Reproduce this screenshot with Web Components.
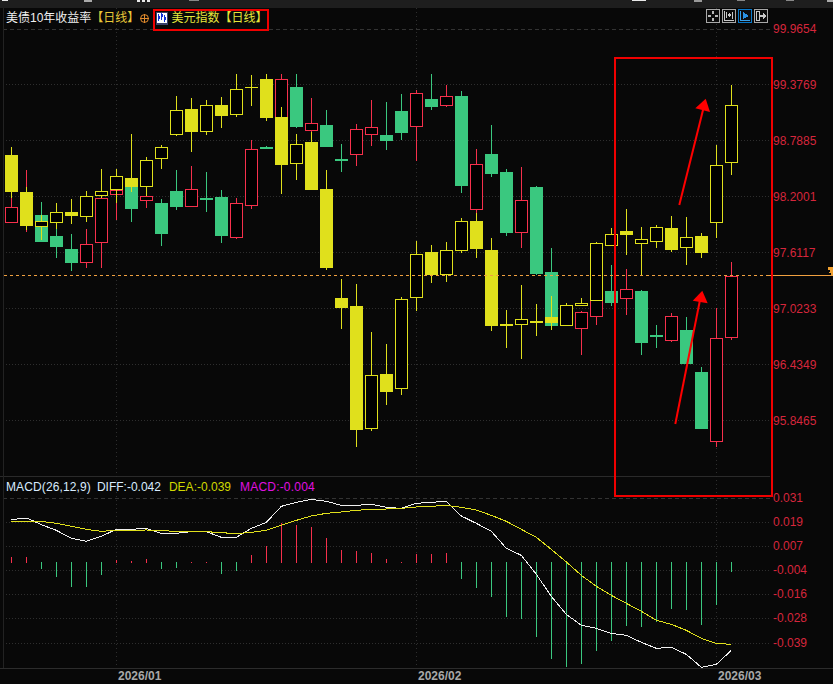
<!DOCTYPE html>
<html lang="zh"><head><meta charset="utf-8"><title>K线</title>
<style>html,body{margin:0;padding:0;background:#080808}</style></head>
<body>
<chart-app>
  <span slot="title1">美债10年收益率</span><span slot="cycle1">【日线】</span>
  <span slot="title2">美元指数【日线】</span>
</chart-app>
<script>
const NS='http://www.w3.org/2000/svg';
const YEL='#e0e01c',GRN='#3ac87f',RED='#f6304c';
const cx=i=>11.5+15*i;
function el(n,a){const e=document.createElementNS(NS,n);for(const k in a)e.setAttribute(k,a[k]);return e}
function candle(g,i,d,col,hollow){
  if(!d)return;
  const [hi,t,b,lo]=d,x=cx(i);
  g.append(el('rect',{x:x-.5,y:hi,width:1,height:lo-hi,fill:col}));
  if(hollow){
    g.append(el('rect',{x:x-6.5,y:t,width:13,height:b-t,fill:col}));
    g.append(el('rect',{x:x-5.5,y:t+1,width:11,height:b-t-2,fill:'#000'}));
  }else g.append(el('rect',{x:x-6.5,y:t,width:13,height:b-t,fill:col}));
}
/* [high, body top, body bottom, low, hollow] */
const DXY=[[198,207,223,223,1],[170,195,220,232,1],[202,215,242,242,0],[226,236,247,258,0],[234,249,263,271,0],[229,244,263,268,1],[196,198,243,268,1],[188,190,195,220,1],[187,187,209,222,0],[187,196,201,208,1],[199,203,234,246,0],[170,191,207,210,0],[166,189,207,207,1],[172,198,200,212,0],[190,197,236,243,0],[198,203,238,239,1],[140,149,206,209,1],[146,147,149,149,0],[74,79,118,120,1],[74,87,127,128,0],[98,123,131,142,1],[110,125,147,147,0],[144,159,161,172,0],[124,129,155,166,1],[100,127,135,146,1],[102,135,141,150,0],[94,111,133,140,0],[90,93,127,161,1],[74,99,107,110,0],[85,96,106,107,1],[91,96,186,193,0],[149,164,210,222,1],[125,154,174,177,0],[169,172,233,236,0],[167,200,233,248,1],[186,187,274,275,0],[248,272,326,326,0],null,[311,312,329,355,1],[300,300,317,325,1],[265,291,303,306,0],[269,289,299,315,1],[290,291,343,355,0],[325,335,337,348,0],[313,316,341,342,1],[317,330,364,364,0],[367,372,429,429,0],[308,338,442,447,1],[262,276,338,340,1]];
const UST=[[147,155,192,198,0],[187,192,226,230,0],[215,221,227,240,1],[203,212,223,229,1],[199,212,216,224,0],[191,196,217,222,1],[169,191,196,198,1],[169,176,190,203,1],[134,178,187,192,0],[157,160,187,196,1],[145,147,159,169,1],[96,110,135,136,1],[98,109,132,152,0],[100,105,132,135,1],[97,105,116,128,0],[74,89,115,117,1],[75,87,88,106,0],[74,79,118,121,0],[107,117,165,194,0],[134,144,164,180,1],[132,142,190,190,0],[170,189,268,270,0],[279,298,308,329,0],[284,306,430,447,0],[332,375,429,431,1],[344,374,392,405,0],[297,299,389,395,1],[241,254,298,311,1],[245,252,275,283,0],[242,250,275,282,1],[218,221,251,253,1],[213,221,249,258,0],[238,250,326,331,0],[310,324,326,348,0],[285,319,325,359,1],[304,321,323,336,0],[296,317,323,330,0],[303,305,326,326,1],[298,303,306,306,1],[242,243,301,301,1],[228,234,246,246,1],[209,231,235,255,0],[227,239,244,275,1],[225,227,242,248,1],[216,228,250,252,0],[217,237,248,265,1],[233,236,253,258,0],[145,165,223,238,1],[85,105,163,175,1]];
/* histogram end y, base 563 */
const HIST=[557,557,569,577,587,587,575,560,561,559,569,568,562,562,574,571,555,546,523,525,527,538,550,551,553,559,562,554,554,553,579,588,597,617,619,637,659,667,664,651,641,626,627,622,609,610,625,605,572];
const DIFF=[[34,131],[60,128],[85,128],[124,146],[169,163],[214,187],[259,196],[304,181],[349,160],[394,160],[439,157],[484,172],[529,172],[574,167],[619,167],[664,184],[709,184],[754,157],[799,139]].map(p=>[p[0]/3,476+p[1]/3])
 .concat([[4,91],[49,79],[94,70],[139,76],[184,88],[229,88],[274,85],[319,94],[364,97],[409,82],[454,79],[499,76],[544,120],[589,142],[634,166],[679,217],[724,238],[769,295],[814,361]].map(p=>[280+p[0]/3,476+p[1]/3]))
 .concat([[19,415],[64,448],[109,457],[154,472],[199,478],[244,499],[289,517],[334,514],[379,535],[424,574],[469,565],[514,523]].map(p=>[560+p[0]/3,476+p[1]/3]));
const DEA=[[34,136],[124,136],[169,142],[214,151],[259,160],[304,166],[349,163],[439,162],[484,163],[529,167],[619,167],[664,170],[709,173],[754,169],[799,163]].map(p=>[p[0]/3,476+p[1]/3])
 .concat([[4,148],[49,133],[94,120],[139,112],[184,108],[229,103],[274,100],[319,99],[364,97],[409,93],[454,91],[499,88],[544,94],[589,102],[634,118],[679,136],[724,160],[769,184],[814,220]].map(p=>[280+p[0]/3,476+p[1]/3]))
 .concat([[19,258],[64,298],[109,331],[154,358],[199,382],[244,406],[289,433],[334,445],[379,463],[424,487],[469,502],[514,505]].map(p=>[560+p[0]/3,476+p[1]/3]));

function grid(svg,ys,y0,y1){
  const g=el('g',{'shape-rendering':'crispEdges',fill:'none'});
  ys.forEach((y,k)=>g.append(el('line',{x1:3,x2:770,y1:y+.5,y2:y+.5,stroke:k?'#2e2e2e':'#333','stroke-dasharray':k?'1 2':'4 3'})));
  [116.5,416.5,716.5].forEach(x=>g.append(el('line',{x1:x,x2:x,y1:y0,y2:y1,stroke:'#2e2e2e','stroke-dasharray':'1 3'})));
  g.append(el('line',{x1:3.5,x2:3.5,y1:y0,y2:y1,stroke:'#222'}));
  g.append(el('line',{x1:770.5,x2:770.5,y1:y0,y2:y1,stroke:'#2a2a2a','stroke-dasharray':'1 3'}));
  svg.append(g);
}

class TopStrip extends HTMLElement{constructor(){super();this.attachShadow({mode:'open'}).innerHTML=`
<style>:host{display:flex;height:8px;background:#1e1e1e;overflow:hidden}svg{display:block}</style>
<svg width="833" height="8" shape-rendering="crispEdges">
<g fill="#e8e8e8"><rect x="2" y="0" width="6" height="1"/><rect x="84" y="0" width="8" height="2" fill="#aaa"/><rect x="137" y="0" width="3" height="2"/><rect x="142" y="0" width="3" height="2"/><rect x="147" y="0" width="3" height="2"/><rect x="189" y="0" width="10" height="1" fill="#888"/>
<rect x="632" y="0" width="14" height="1"/><rect x="694" y="0" width="8" height="2" fill="#999"/><rect x="737" y="0" width="8" height="1" fill="#888"/><rect x="786" y="0" width="8" height="1" fill="#888"/><rect x="827" y="0" width="6" height="2" fill="#aaa"/></g></svg>`}}
customElements.define('top-strip',TopStrip);

class ToolButton extends HTMLElement{constructor(){super();this.attachShadow({mode:'open'}).innerHTML=`
<style>:host{display:flex;width:12px;height:12px;border:1px solid #a8a8a8;background:#0c0c0c}
:host([active]){border-color:#0a78c8}::slotted(svg){display:block}</style><slot></slot>`}}
customElements.define('tool-button',ToolButton);

class AxisLabels extends HTMLElement{constructor(){super();this.attachShadow({mode:'open'}).innerHTML=`
<style>:host{display:flex;flex-direction:column;font:12px/14px "Liberation Sans",Arial,sans-serif;color:#d6263c;padding-left:3px;overflow:visible}
span{display:block;height:14px;white-space:nowrap}</style>`;
 const r=this.shadowRoot;(this.getAttribute('values')||'').split(',').forEach(v=>{const s=document.createElement('span');s.textContent=v;r.append(s)});
 const st=document.createElement('style');st.textContent=`:host{padding-top:${this.getAttribute('top')}px;gap:${this.getAttribute('gap')}px}`;r.append(st);}}
customElements.define('axis-labels',AxisLabels);

class KlinePane extends HTMLElement{constructor(){super();const r=this.attachShadow({mode:'open'});r.innerHTML=`
<style>:host{display:grid;grid-template-columns:770px 63px;height:468px;position:relative;box-sizing:border-box}
.plot{position:relative;height:468px}svg.c{display:block}
.legend{position:absolute;left:6px;top:3px;display:flex;align-items:center;font:12px/14px "Liberation Sans","Noto Sans CJK SC",sans-serif;color:#f0f0f0;white-space:nowrap}
.cyc{color:#e8c838;margin-right:1px}.t2{color:#e6e63c;margin-left:3px}
.tools{position:absolute;right:2px;top:1px;display:flex;gap:2px}
.legend svg{display:block}.leg-ico{margin-left:7px}
.mark{position:absolute;left:58px;top:259px;width:5px;height:8px}
.price{position:relative}
</style>
<div class="plot"><svg class="c" width="770" height="468" viewBox="0 8 770 468"></svg>
<div class="legend"><slot name="title1"></slot><span class="cyc"><slot name="cycle1"></slot></span>
<svg width="9" height="9" viewBox="0 0 9 9"><circle cx="4.5" cy="4.5" r="3.9" fill="none" stroke="#e08a2c"/><path d="M0 4.5H9M4.5 0V9" stroke="#e08a2c"/></svg>
<svg class="leg-ico" width="12" height="13" viewBox="0 0 12 13" shape-rendering="crispEdges"><rect width="12" height="13" fill="#39406a"/><rect x="0.5" y="0.5" width="10" height="10" fill="#fff"/><path d="M2.5 2V9M5.5 1V8M8.5 3V10" stroke="#1030d8"/><rect x="2" y="4" width="2" height="3" fill="#1030d8"/><rect x="5" y="2" width="2" height="3" fill="#1030d8"/><rect x="8" y="5" width="2" height="3" fill="#1030d8"/></svg>
<span class="t2"><slot name="title2"></slot></span></div>
<div class="tools">
<tool-button><svg width="12" height="12" viewBox="0 0 12 12" shape-rendering="crispEdges" fill="#b8b8b8"><rect x="5" y="1" width="2" height="3"/><rect x="5" y="8" width="2" height="3"/><rect x="1" y="5" width="3" height="2"/><rect x="8" y="5" width="3" height="2"/></svg></tool-button>
<tool-button><svg width="12" height="12" viewBox="0 0 12 12" shape-rendering="crispEdges" fill="#c8c8c8"><rect x="1" y="1" width="1" height="10"/><rect x="1" y="10" width="10" height="1"/><rect x="3" y="2" width="1" height="6"/><rect x="5" y="4" width="3" height="2"/><rect x="6" y="3" width="1" height="4"/><rect x="9" y="2" width="1" height="7"/></svg></tool-button>
<tool-button active><svg width="12" height="12" viewBox="0 0 12 12" shape-rendering="crispEdges"><path d="M1 1H2V10H11V11H1Z" fill="#3aa0e8"/><path d="M4 2L10 6L4 9Z" fill="#2a90e0"/></svg></tool-button>
<tool-button><svg width="12" height="12" viewBox="0 0 12 12" shape-rendering="crispEdges" fill="#c8c8c8"><path d="M1 1H5V11H1ZM2 2V10H4V2Z"/><rect x="5" y="5" width="4" height="2"/><path d="M8 3L11 6L8 9Z"/></svg></tool-button>
</div></div>
<div class="price"><axis-labels top="14" gap="42" values="99.9654,99.3769,98.7885,98.2001,97.6117,97.0233,96.4349,95.8465"></axis-labels>
<svg class="mark" viewBox="0 0 5 8" shape-rendering="crispEdges"><path d="M0 0H5V8H3V6H1V5H2V3H0Z" fill="#f0a030"/></svg></div>`;
 const svg=r.querySelector('svg.c');
 grid(svg,[29,84,140,196,252,308,364,420],8,476);
 const g=el('g',{'shape-rendering':'crispEdges'});
 DXY.forEach((d,i)=>d&&candle(g,i,d,d[4]?RED:GRN,d[4]));
 UST.forEach((d,i)=>candle(g,i,d,YEL,d[4]));
 svg.append(g);
 svg.append(el('line',{x1:4,x2:768,y1:275.5,y2:275.5,stroke:'#f0a040','stroke-dasharray':'3 3','shape-rendering':'crispEdges'}));
 }}
customElements.define('kline-pane',KlinePane);

class MacdPane extends HTMLElement{constructor(){super();const r=this.attachShadow({mode:'open'});r.innerHTML=`
<style>:host{display:grid;grid-template-columns:770px 63px;height:192px;position:relative}
.plot{position:relative;height:192px}svg{display:block}
.legend{position:absolute;left:6px;top:4px;display:flex;gap:9px;font:12px/14px "Liberation Sans",Arial,sans-serif;white-space:nowrap;color:#d8ecff}
.n{margin-right:-3px;letter-spacing:.12px}.a{color:#d0d800;margin-left:-1px}.b{color:#e010e0;letter-spacing:.2px}
</style>
<div class="plot"><svg width="770" height="192" viewBox="0 476 770 192"></svg>
<div class="legend"><span class="n">MACD(26,12,9)</span><span>DIFF:-0.042</span><span class="a">DEA:-0.039</span><span class="b">MACD:-0.004</span></div></div>
<axis-labels top="15" gap="10.1" values="0.031,0.019,0.007,-0.004,-0.016,-0.028,-0.039"></axis-labels>`;
 const svg=r.querySelector('svg');
 const top=el('line',{x1:0,x2:770,y1:476.5,y2:476.5,stroke:'#2a2a2a','shape-rendering':'crispEdges'});svg.append(top);
 grid(svg,[498,522,546,570,594,618,643],476,668);
 const g=el('g',{'shape-rendering':'crispEdges'});
 HIST.forEach((y,i)=>{const up=y<563;g.append(el('rect',{x:cx(i)-.5,y:up?y:562,width:1,height:up?563-y:y-562,fill:up?RED:GRN}))});
 svg.append(g);
 const pl=(p,c)=>svg.append(el('polyline',{points:p.map(q=>q.join(',')).join(' '),fill:'none',stroke:c,'stroke-width':1,'shape-rendering':'crispEdges'}));
 pl(DIFF,'#f0f0f0');pl(DEA,'#e0e01c');
 }}
customElements.define('macd-pane',MacdPane);

class TimeAxis extends HTMLElement{constructor(){super();this.attachShadow({mode:'open'}).innerHTML=`
<style>:host{display:flex;height:16px;box-sizing:border-box;border-top:1px solid #2c2c2c;padding-left:118px;font:bold 12px/15px "Liberation Sans",Arial,sans-serif;color:#a8a8a8}
span{display:block;flex:0 0 300px}</style><span>2026/01</span><span>2026/02</span><span>2026/03</span>`}}
customElements.define('time-axis',TimeAxis);

class NoteLayer extends HTMLElement{constructor(){super();this.attachShadow({mode:'open'}).innerHTML=`
<style>:host{position:absolute;left:0;top:0;width:833px;height:684px;pointer-events:none}svg{display:block}</style>
<svg width="833" height="684" viewBox="0 0 833 684">
<line x1="768" x2="833" y1="275.5" y2="275.5" stroke="#f0a040" shape-rendering="crispEdges"/>
<g fill="none" stroke="#f00000" stroke-width="2" shape-rendering="crispEdges"><rect x="615" y="58" width="157" height="438"/><rect x="154" y="10" width="114" height="20"/></g>
<line x1="679.3" y1="205" x2="703.5" y2="108" stroke="#f00" stroke-width="2"/><path d="M705.7 98.7L695.3 108.3L710 112Z" fill="#f00"/>
<line x1="675.3" y1="424" x2="700" y2="300" stroke="#f00" stroke-width="2"/><path d="M702.3 290.7L692.7 300.7L707.7 303.3Z" fill="#f00"/>
</svg>`}}
customElements.define('note-layer',NoteLayer);

class ChartApp extends HTMLElement{constructor(){super();this.attachShadow({mode:'open'}).innerHTML=`
<style>:host{display:flex;flex-direction:column;width:833px;height:684px;background:#080808;position:relative;overflow:hidden}</style>
<top-strip></top-strip>
<kline-pane><slot name="title1" slot="title1"></slot><slot name="cycle1" slot="cycle1"></slot><slot name="title2" slot="title2"></slot></kline-pane>
<macd-pane></macd-pane><time-axis></time-axis><note-layer></note-layer>`}}
customElements.define('chart-app',ChartApp);
</script>
</body></html>
